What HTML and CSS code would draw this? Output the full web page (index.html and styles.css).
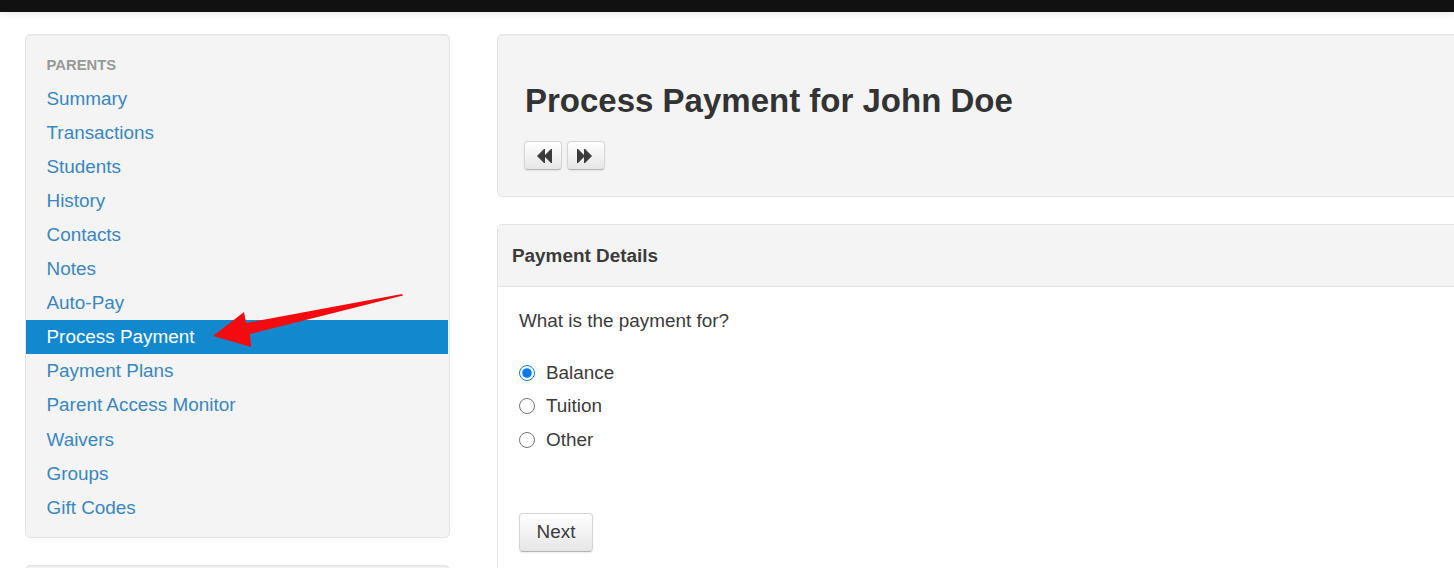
FILE: index.html
```html
<!DOCTYPE html>
<html lang="en">
<head>
<meta charset="utf-8">
<title>Process Payment</title>
<link rel="stylesheet" href="styles.css">
</head>
<body>
<header class="topbar"></header>
<div class="page">
  <aside class="sidebar">
    <nav class="well nav-well">
      <div class="nav-header">PARENTS</div>
      <a class="nav-link" href="#">Summary</a>
      <a class="nav-link" href="#">Transactions</a>
      <a class="nav-link" href="#">Students</a>
      <a class="nav-link" href="#">History</a>
      <a class="nav-link" href="#">Contacts</a>
      <a class="nav-link" href="#">Notes</a>
      <a class="nav-link" href="#">Auto-Pay</a>
      <a class="nav-link active" href="#">Process Payment</a>
      <a class="nav-link" href="#">Payment Plans</a>
      <a class="nav-link" href="#">Parent Access Monitor</a>
      <a class="nav-link spaced" href="#">Waivers</a>
      <a class="nav-link" href="#">Groups</a>
      <a class="nav-link" href="#">Gift Codes</a>
    </nav>
    <div class="well second-well"></div>
  </aside>
  <main class="main">
    <section class="well hero">
      <h1 class="title">Process Payment for John Doe</h1>
      <div class="pager">
        <button class="btn btn-icon" type="button" aria-label="Previous">
          <svg width="20" height="16" viewBox="0 0 20 16"><path d="M11.5 1V15L4.5 8ZM18.5 1V15L11.5 8Z" fill="#3a3a3a" stroke="#3a3a3a" stroke-linejoin="round"/></svg>
        </button>
        <button class="btn btn-icon" type="button" aria-label="Next">
          <svg width="20" height="16" viewBox="0 0 20 16"><path d="M1.5 1V15L8.5 8ZM8.5 1V15L15.5 8Z" fill="#3a3a3a" stroke="#3a3a3a" stroke-linejoin="round"/></svg>
        </button>
      </div>
    </section>
    <section class="panel">
      <div class="panel-head">Payment Details</div>
      <div class="panel-body">
        <p class="question">What is the payment for?</p>
        <div class="radios">
          <label class="radio"><input type="radio" name="for" checked><span>Balance</span></label>
          <label class="radio"><input type="radio" name="for"><span>Tuition</span></label>
          <label class="radio"><input type="radio" name="for"><span>Other</span></label>
        </div>
        <button class="btn btn-next" type="button">Next</button>
      </div>
    </section>
  </main>
</div>
<svg class="arrow" width="200" height="60" viewBox="0 0 200 60" aria-hidden="true">
  <path d="M0 43L31 19L33 30L189 1L190 2.5L37 41L38 54Z" fill="#f40b0f"/>
</svg>
</body>
</html>
```
FILE: styles.css
```css
* { box-sizing: border-box; }
html, body { margin: 0; height: 568px; overflow: hidden; }
body {
  background: #fff;
  color: #3b3b3b;
  font-family: "Liberation Sans", Arial, sans-serif;
  font-size: 18.9px;
  position: relative;
}
.topbar {
  height: 12px;
  background: #111;
  box-shadow: 0 1px 8px rgba(0, 0, 0, .12);
}
.page {
  display: flex;
  gap: 47px;
  padding: 22px 0 0 25px;
  width: 1600px;
}
.sidebar { width: 425px; flex: none; }
.well {
  background: #f4f4f4;
  border: 1px solid #e4e4e4;
  border-radius: 5px;
  box-shadow: inset 0 1px 1px rgba(0, 0, 0, .03);
}
.nav-well { height: 504px; padding-top: 12px; }
.second-well { height: 60px; margin-top: 27px; }
.nav-header {
  color: #999;
  font-size: 14.8px;
  font-weight: bold;
  height: 35px;
  line-height: 37px;
  padding-left: 20.5px;
}
.nav-link {
  display: block;
  height: 34px;
  line-height: 33px;
  padding-left: 20.5px;
  color: #3a87bd;
  text-decoration: none;
}
.nav-link.spaced { margin-top: 1px; }
.nav-link.active {
  background: #1288cf;
  color: #fff;
  margin-right: 1px;
}
.main { width: 1040px; flex: none; }
.hero { height: 163px; padding: 46px 26px 0; }
.title {
  margin: 0;
  padding-left: 1px;
  font-size: 33px;
  line-height: 40px;
  font-weight: bold;
  color: #333;
}
.pager { display: flex; gap: 5px; margin-top: 20px; }
.btn {
  background: linear-gradient(#fff, #e6e6e6);
  border: 1px solid #d6d6d6;
  border-bottom-color: #b5b5b5;
  border-radius: 4px;
  box-shadow: 0 1px 2px rgba(0, 0, 0, .08);
  color: #333;
  font-family: inherit;
  padding: 0;
}
.btn-icon {
  width: 38px;
  height: 29px;
  display: flex;
  align-items: center;
  justify-content: center;
}
.panel {
  margin-top: 27px;
  border: 1px solid #e4e4e4;
  border-radius: 5px 5px 0 0;
  height: 400px;
}
.panel-head {
  height: 62px;
  line-height: 62px;
  padding-left: 14px;
  background: #f4f4f4;
  border-bottom: 1px solid #e2e2e2;
  font-weight: bold;
  border-radius: 5px 5px 0 0;
}
.panel-body { padding: 22px 21px 0; }
.question { margin: 0; line-height: 24px; }
.radios { margin-top: 22.45px; }
.radio {
  display: flex;
  align-items: center;
  gap: 11px;
  height: 33.6px;
  line-height: 33px;
}
.radio input {
  width: 16px;
  height: 16px;
  margin: 1px 0 0;
  accent-color: #0a7ae8;
}
.btn-next {
  display: block;
  width: 74px;
  height: 39px;
  margin-top: 56.55px;
  font-size: 18.9px;
  color: #3b3b3b;
}
.arrow {
  position: absolute;
  left: 213px;
  top: 293px;
}
```
